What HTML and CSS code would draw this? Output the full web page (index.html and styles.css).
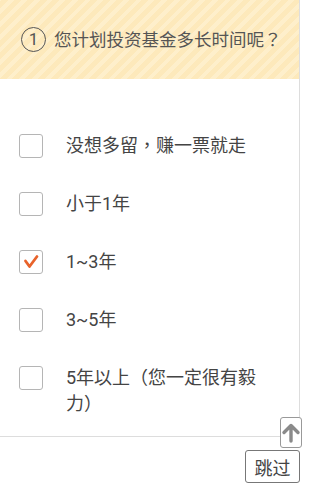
FILE: index.html
```html
<!DOCTYPE html>
<html lang="zh-TW">
<head>
    <meta charset="UTF-8">
    <meta name="viewport" content="width=device-width, initial-scale=1.0">
    <title>投资期限</title>
    <link rel="stylesheet" href="styles.css">
</head>
<body>
    <div class="card">
        <div class="question">
            <span class="num">1</span>
            <span class="question-text">您计划投资基金多长时间呢？</span>
        </div>

        <ul class="options">
            <li class="option">
                <span class="box"></span>
                <span class="label">没想多留，赚一票就走</span>
            </li>
            <li class="option">
                <span class="box"></span>
                <span class="label">小于1年</span>
            </li>
            <li class="option checked">
                <span class="box">
                    <svg width="24" height="24" viewBox="0 0 24 24">
                        <polyline points="6.5,11 10.5,16.5 18,6.5" fill="none" stroke="#e8632b" stroke-width="2.8" stroke-linecap="round" stroke-linejoin="round"/>
                    </svg>
                </span>
                <span class="label">1~3年</span>
            </li>
            <li class="option">
                <span class="box"></span>
                <span class="label">3~5年</span>
            </li>
            <li class="option">
                <span class="box"></span>
                <span class="label">5年以上（您一定很有毅力）</span>
            </li>
        </ul>
    </div>

    <!-- 浮动按钮 -->
    <button class="to-top" type="button">
        <svg width="20" height="22" viewBox="0 0 20 22">
            <path d="M10 19V4M3 10.5L10 3.5 17 10.5" fill="none" stroke="#8a8a8a" stroke-width="3.4" stroke-linecap="round" stroke-linejoin="round"/>
        </svg>
    </button>
    <button class="skip" type="button">跳过</button>
</body>
</html>
```

FILE: styles.css
```css
body {
    margin: 0;
    background: #fff;
    font-family: Roboto, "Noto Sans CJK TC", sans-serif;
    color: #444;
}

.card {
    width: 300px;
    box-sizing: border-box;
    border-right: 1px solid #ddd;
    border-bottom: 1px solid #ddd;
    border-bottom-right-radius: 6px;
    padding-bottom: 19px;
}

/* 题目 */
.question {
    height: 79px;
    display: flex;
    align-items: center;
    padding-left: 21px;
    background: repeating-linear-gradient(-45deg, #fde9bb 0, #fde9bb 5px, #feefcb 5px, #feefcb 9px);
    color: #555;
}

.num {
    width: 23px;
    height: 23px;
    border: 1.5px solid #555;
    border-radius: 50%;
    display: flex;
    justify-content: center;
    align-items: center;
    font-size: 17px;
    line-height: 1;
    margin-right: 8px;
}

.question-text {
    font-size: 17.5px;
    line-height: 26px;
}

/* 选项 */
.options {
    list-style: none;
    margin: 0;
    padding: 54px 33px 0 19px;
}

.option {
    display: flex;
    align-items: flex-start;
    margin-bottom: 32px;
}

.option:last-child {
    margin-bottom: 0;
}

.box {
    flex: none;
    width: 24px;
    height: 24px;
    box-sizing: border-box;
    border: 1px solid #b5b5b5;
    border-radius: 3px;
    margin-top: 1px;
    margin-right: 23px;
    position: relative;
}

.box svg {
    position: absolute;
    top: -1px;
    left: -1px;
}

.label {
    font-size: 18px;
    line-height: 26px;
    color: #444;
}

/* 右下角按钮 */
.to-top {
    position: absolute;
    left: 280px;
    top: 417px;
    width: 22px;
    height: 31px;
    padding: 0;
    background: #fff;
    border: 1px solid #999;
    border-radius: 3px;
    display: flex;
    justify-content: center;
    align-items: center;
}

.skip {
    position: absolute;
    left: 245px;
    top: 450px;
    width: 55px;
    height: 33px;
    padding: 0;
    background: #fff;
    border: 1px solid #777;
    border-radius: 3px;
    font-family: "Noto Sans CJK TC", sans-serif;
    font-size: 18px;
    color: #444;
}
```
